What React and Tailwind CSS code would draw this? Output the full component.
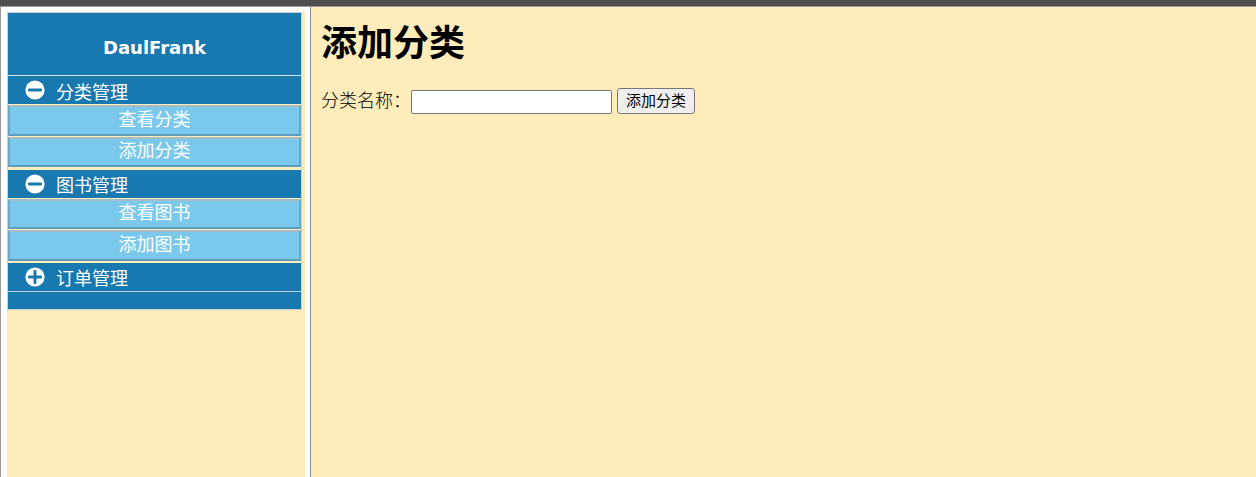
const CircleIcon = ({ plus }) => (
  <svg width="20" height="20" viewBox="0 0 20 20" className="shrink-0">
    <circle cx="10" cy="10" r="9.6" fill="#ffffff" />
    <rect x="3" y="8.5" width="14" height="3" rx="1" fill="#1878b0" />
    {plus && <rect x="8.5" y="3" width="3" height="14" rx="1" fill="#1878b0" />}
  </svg>
);

const GroupHead = ({ title, plus, low }) => (
  <div className="h-[28px] flex items-start pl-[17px] bg-[#1878b0] text-white text-[18px] leading-[28px]">
    <div className="mt-[4px]">
      <CircleIcon plus={plus} />
    </div>
    <span className={low ? "ml-[11px] mt-[3px]" : "ml-[11px] mt-[2px]"}>{title}</span>
  </div>
);

const SubItem = ({ title, tall }) => (
  <div
    className={
      (tall ? "h-[31px] leading-[27px] " : "h-[30px] leading-[25px] ") +
      "border-2 border-[#6aa9c9] border-t-[#a8bcc8] border-b-[#5a9dbd] bg-[#7ac8ec] text-white text-[18px] text-center box-border"
    }
  >
    {title}
  </div>
);

const App = () => {
  return (
    <div
      className="h-[477px] overflow-hidden flex flex-col bg-white"
      style={{ fontFamily: '"Liberation Sans", "Noto Sans CJK SC", sans-serif' }}
    >
      <div className="h-[7px] shrink-0 bg-[#4f4f4f] border-b border-[#9a9a9a]" />
      <div className="flex flex-1 min-h-0">
        {/* left menu */}
        <div className="w-[311px] shrink-0 bg-white border-l border-r border-l-[#9a9a9a] border-r-[#8a8a9a] pl-[6px] pr-[5px] pt-[5px]">
          <div className="h-full bg-[#feedba]">
            <div className="w-[295px] border border-[#cfcfcf]">
              <div
                className="h-[62px] pt-[24px] bg-[#1878b0] text-center text-white font-bold text-[18px] leading-[22px]"
                style={{ fontFamily: '"DejaVu Sans", sans-serif' }}
              >
                DaulFrank
              </div>
              <div className="border-t border-[#d8e8f0]">
                <GroupHead title="分类管理" low />
                <div className="flex flex-col gap-[1px] pt-[1px]">
                  <SubItem title="查看分类" tall />
                  <SubItem title="添加分类" />
                </div>
              </div>
              <div className="h-[3px]" />
              <GroupHead title="图书管理" />
              <div className="flex flex-col gap-[1px] pt-[1px]">
                <SubItem title="查看图书" />
                <SubItem title="添加图书" tall />
              </div>
              <div className="h-[2px]" />
              <GroupHead title="订单管理" plus />
              <div className="h-[18px] bg-[#1878b0] border-t border-[#c4d4e0]" />
            </div>
          </div>
        </div>
        {/* content */}
        <div className="flex-1 bg-[#feedba] pl-[10px] text-black">
          <h1 className="text-[36px] font-bold leading-[42px] mt-[16px]">添加分类</h1>
          <div className="flex items-center mt-[21px] text-[18px]">
            <span className="w-[90px] mt-[2px] font-light">分类名称：</span>
            <input
              type="text"
              className="w-[201px] h-[24px] mt-[2px] bg-white border border-[#767676] rounded-[2px]"
            />
            <button className="ml-[5px] w-[78px] h-[26px] bg-[#efefef] border border-[#767676] rounded-[3px] text-[15px] leading-[24px] text-center text-black">
              添加分类
            </button>
          </div>
        </div>
      </div>
    </div>
  );
};

export default App;
